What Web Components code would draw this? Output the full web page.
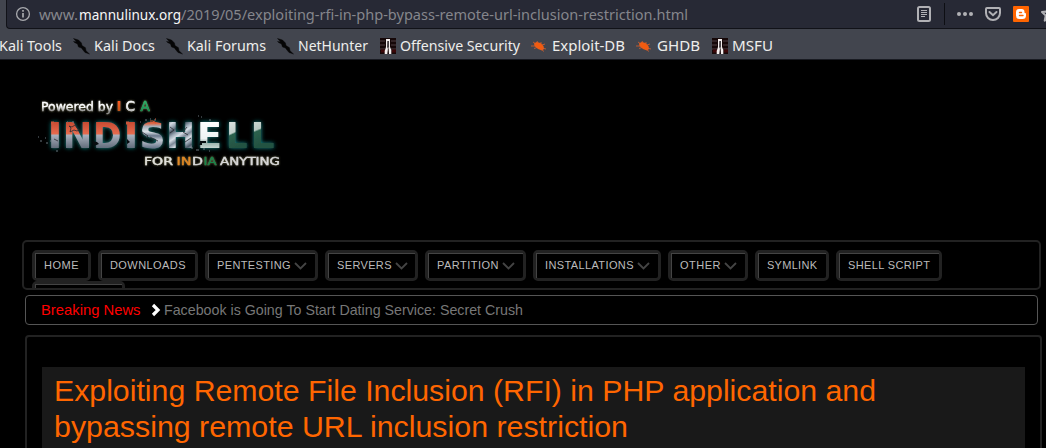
<!DOCTYPE html>
<html lang="en"><head><meta charset="utf-8"><title>Mannu Linux</title>
<style>html,body{margin:0;background:#000;height:448px;overflow:hidden}body{font-family:"Liberation Sans",Arial,sans-serif}</style></head>
<body><blog-window></blog-window>
<script>
const define=(name,html)=>customElements.define(name,class extends HTMLElement{
  connectedCallback(){if(this.shadowRoot)return;const r=this.attachShadow({mode:'open'});r.innerHTML=typeof html==='function'?html(this):html}
});
/* One line of text set to a fixed measure. */
define('fit-text',e=>{const w=+e.getAttribute('w'),h=+e.getAttribute('h')||20,b=+e.getAttribute('b')||15;
  return `<style>:host{display:block;flex:none;width:${w}px;height:${h}px}svg{display:block;overflow:visible}text{fill:currentColor;font:inherit}</style><svg width="${w}" height="${h}"><text x="0" y="${b}" textLength="${w}" lengthAdjust="${e.getAttribute('adjust')||'spacingAndGlyphs'}">${e.textContent}</text></svg>`});

const icons={
 kali:'<path d="M.5 .5l5 1.500 3 3 .5 2.500 3.500 2.200 .5 3 3.500 3.300-4.500-1.500-2.500-3-1-1.500-3-1-1-3-3-1.500-1-1 3 .3z" fill="#050506" stroke="#050506" stroke-width=".4"/>',
 off:'<path d="M0 0h16v16H0z" fill="#160809"/><path d="M0 3h5M0 7h5M0 11h5M11 3h5M11 7h5M11 11h5" stroke="#3d2c30" stroke-width="1.3"/><path d="M1 13h4M12 13h4" stroke="#3c0709" stroke-width="3"/><path d="M6 1h4v8l1.300 3v4H9l-.4-6-.7 1-.6 5H4.700v-3L6 9z" fill="#f4eeee"/><path d="M7.400 3h1.400v6L8 11l-.8-2z" fill="#201b20"/>',
 bug:'<path d="M3 5.500l2.500-1.500 4 1 3 3 .5 3-2 1.500-4-1.500-3.500-3z" fill="#f25b10"/><path d="M2 4l3 2M0 8h5M3 10.500l3-1M6 3l1 2M10 4l0 2M11 7l3-1M11 10l4 1M10 11l3 2.500" stroke="#d8602c" stroke-width=".8"/>'
};
define('book-mark',e=>{const k=e.getAttribute('icon');return `<style>:host{display:flex;height:20px;margin-right:11px;flex:none;color:#eeeeec;font:15px "Noto Sans",sans-serif}svg{width:17px;height:17px;margin:2px 4px 0 0}.off svg,.bug svg{width:16px;height:16px}.off svg{margin-left:1px}.bug svg{margin:2px 5px 0 0}.row{display:flex}</style><div class="row ${k||''}">${k?`<svg viewBox="0 0 ${k=='kali'?17:16} ${k=='kali'?17:16}">${icons[k]}</svg>`:''}<fit-text w="${e.getAttribute('w')}">${e.textContent}</fit-text></div>`});
define('address-bar',`<style>:host{display:block;height:29px;background:#42454e;box-sizing:border-box;padding-left:6px}
.field{display:flex;box-sizing:border-box;height:29px;background:#272935;border:solid #111218;border-width:0 0 1px 1px;border-radius:0 0 0 4px;font:15px "Noto Sans",sans-serif;color:#85868c;padding:5px 0 0 8px}.info{width:16px;height:16px;margin:1px 8px 0 0;flex:none}.www{margin-right:1px}.host{color:#f7f7f7}.tools{flex:none;display:block;width:140px;height:28px;margin:-5px 0 0 218px}</style>
<div class="field"><svg class="info" viewBox="0 0 16 16" fill="none" stroke="#a9aaae"><circle cx="8" cy="8" r="6.400" stroke-width="1.300"/><path d="M8 7v4.500M8 4v1.700" stroke-width="1.700"/></svg>
<fit-text class="www" w="39">www.</fit-text><fit-text class="host" w="102">mannulinux.org</fit-text><fit-text w="507">/2019/05/exploiting-rfi-in-php-bypass-remote-url-inclusion-restriction.html</fit-text>
<svg class="tools" viewBox="906 0 140 28"><rect x="918" y="7" width="12" height="14" rx="1.500" fill="none" stroke="#b1b1b5" stroke-width="2"/><path d="M921 10.500h6M921 12.500h6M921 14.500h6M921 16.500h4" stroke="#b1b1b5"/><path d="M944.500 3v22" stroke="#0d0e13"/><g fill="#b1b1b5"><circle cx="959" cy="14" r="2"/><circle cx="965" cy="14" r="2"/><circle cx="971" cy="14" r="2"/></g><path d="M987 8h12q1 0 1 1v4a7 7 0 0 1-14 0V9q0-1 1-1z" fill="none" stroke="#b1b1b5" stroke-width="2"/><path d="M989.500 12l3.500 3.200 3.500-3.200" fill="none" stroke="#b1b1b5" stroke-width="2" stroke-linecap="round"/><rect x="1013" y="6" width="16" height="16" rx="1" fill="#ff6501"/><path d="M1019 9h2.500q3 0 3 3v.5q0 .5.6.5.9 0 .9 1v1.500q0 3.500-3.500 3.500h-3q-3.500 0-3.500-3.500V12q0-3 3-3z" fill="#fff"/><path d="M1019.500 12.500h2M1019.500 15.500h3.500" stroke="#ff6501" stroke-width="1.400" stroke-linecap="round"/><path d="M1049 7l-2 4.500-5 .6 3.700 3.400-1 5.200 4.300-2.600" fill="none" stroke="#b1b1b5" stroke-width="2" stroke-linejoin="round"/></svg></div>`);
define('bookmark-bar',`<style>:host{display:flex;height:31px;background:#42454e;border-bottom:1px solid #191b22;box-sizing:border-box;padding-top:7px}book-mark:first-of-type{margin-left:-1px}</style>
<book-mark w="63">Kali Tools</book-mark><book-mark icon="kali" w="61">Kali Docs</book-mark><book-mark icon="kali" w="79">Kali Forums</book-mark><book-mark icon="kali" w="70">NetHunter</book-mark><book-mark icon="off" w="120">Offensive Security</book-mark><book-mark icon="bug" w="73">Exploit-DB</book-mark><book-mark icon="bug" w="43">GHDB</book-mark><book-mark icon="off" w="41">MSFU</book-mark>`);

define('site-logo',`<style>:host{display:block;width:260px;height:90px;padding:31px 0 59px 30px}svg{display:block;overflow:visible}text{font-family:"DejaVu Sans",sans-serif;font-weight:bold}.small{font-weight:normal;stroke-width:.35}</style>
<svg width="260" height="90" viewBox="30 91 260 90"><defs>
<linearGradient id="metal" gradientUnits="userSpaceOnUse" x1="0" y1="100" x2="0" y2="114"><stop stop-color="#fff"/><stop offset=".5" stop-color="#fff"/><stop offset=".8" stop-color="#909090"/></linearGradient>
<linearGradient id="red" gradientUnits="userSpaceOnUse" x1="0" y1="121" x2="0" y2="148"><stop stop-color="#c4482f"/><stop offset=".48" stop-color="#e66b4e"/><stop offset=".52" stop-color="#a9b0bd"/><stop offset="1" stop-color="#626d7c"/></linearGradient>
<linearGradient id="steel" gradientUnits="userSpaceOnUse" x1="0" y1="121" x2="0" y2="148"><stop offset=".08" stop-color="#e2603c"/><stop offset=".2" stop-color="#a5afb9"/><stop offset=".4" stop-color="#dce2e8"/><stop offset=".55" stop-color="#68768a"/><stop offset=".7" stop-color="#c3cad3"/><stop offset="1" stop-color="#67768a"/></linearGradient>
<linearGradient id="silver" gradientUnits="userSpaceOnUse" x1="168" y1="121" x2="174" y2="130" spreadMethod="reflect"><stop stop-color="#7a8796"/><stop offset=".35" stop-color="#d5dce4"/><stop offset=".65" stop-color="#a0acb9"/><stop offset="1" stop-color="#4b5866"/></linearGradient>
<linearGradient id="white" gradientUnits="userSpaceOnUse" x1="0" y1="121" x2="0" y2="148"><stop stop-color="#fff"/><stop offset=".65" stop-color="#eef2f2"/><stop offset=".8" stop-color="#9ab1ab"/><stop offset="1" stop-color="#c5d5d0"/></linearGradient>
<linearGradient id="green1" gradientUnits="userSpaceOnUse" x1="229" y1="121" x2="240" y2="145"><stop stop-color="#dde5e3"/><stop offset=".46" stop-color="#c2d0cc"/><stop offset=".52" stop-color="#2b614d"/><stop offset="1" stop-color="#245342"/></linearGradient>
<linearGradient id="green2" gradientUnits="userSpaceOnUse" x1="254" y1="121" x2="263" y2="143"><stop stop-color="#cbd8d4"/><stop offset=".38" stop-color="#b7c8c2"/><stop offset=".45" stop-color="#2b614d"/><stop offset="1" stop-color="#245342"/></linearGradient>
<linearGradient id="orange" gradientUnits="userSpaceOnUse" x1="0" y1="101" x2="0" y2="111"><stop stop-color="#ff5a20"/><stop offset="1" stop-color="#bb541d"/></linearGradient><linearGradient id="emerald" gradientUnits="userSpaceOnUse" x1="0" y1="101" x2="0" y2="111"><stop stop-color="#39c778"/><stop offset="1" stop-color="#087542"/></linearGradient>
<filter id="aura" x="-20%" y="-40%" width="140%" height="180%"><feDropShadow dx="0" dy="0" stdDeviation="2" flood-color="#168a8a"/></filter><filter id="glow" x="-20%" y="-60%" width="140%" height="220%"><feDropShadow dx="0" dy="0" stdDeviation="1.300" flood-color="#77754e"/></filter></defs>
<g filter="url(#glow)"><text class="small" x="41" y="111" font-size="12.500" textLength="72" lengthAdjust="spacingAndGlyphs" fill="url(#metal)" stroke="url(#metal)">Powered by</text><text y="111" font-size="13.500"><tspan x="116.500" fill="url(#orange)">I</tspan><tspan x="125.500" fill="url(#metal)" font-weight="normal" stroke="#eee" stroke-width=".5">C</tspan><tspan x="140.500" fill="url(#emerald)" font-weight="normal" stroke="#20a965" stroke-width=".6">A</tspan></text></g>
<g filter="url(#aura)" font-size="35.500"><text y="147.500" x="47.500" textLength="15" lengthAdjust="spacingAndGlyphs" fill="url(#red)">I</text><text y="147.500" x="62.800" textLength="29.500" lengthAdjust="spacingAndGlyphs" fill="url(#red)">N</text><text y="147.500" x="93" textLength="28.500" lengthAdjust="spacingAndGlyphs" fill="url(#red)">D</text><text y="147.500" x="123.500" textLength="15" lengthAdjust="spacingAndGlyphs" fill="url(#red)">I</text><text y="147.500" x="139.400" textLength="26" lengthAdjust="spacingAndGlyphs" fill="url(#steel)">S</text><text y="147.500" x="166" textLength="29" lengthAdjust="spacingAndGlyphs" fill="url(#silver)">H</text><text y="147.500" x="197" textLength="25" lengthAdjust="spacingAndGlyphs" fill="url(#white)">E</text><text y="147.500" x="226" textLength="21.500" lengthAdjust="spacingAndGlyphs" fill="url(#green1)">L</text><text y="147.500" x="250.500" textLength="24" lengthAdjust="spacingAndGlyphs" fill="url(#green2)">L</text></g>
<path d="M69 126l3 1 3-2 2 3 2 2-2 1-3-1-4 2 1-4zM142 132l6 4-2 2M158 141l-8-4M170 127l4 3-4 3M187 127l-4 5 5 3M185 142l6-4M54 139l4 2" fill="none" stroke="#282a30" stroke-width=".8"/>
<path d="M200 141h6v2h-4v2h-3zM92 141l5 1 2 2-5 2zM127 139l3 3-3 2z" fill="#080d10"/>
<path d="M51 121.500h3v3h-3zM126 121.500h3v3h-3z" fill="#c9543a"/>
<path d="M38 137h1m1 4h2m3-3h1m0 5h2m2-2h1M56 151h2m9-29h1m4 0h2m66 0h1m4-2h2m3-1h1m3 1h2m42-4h1m2 1h1m7 3h2m-20 28h2m3 2h3m4-1h2m4 2h1" stroke="#69757c" stroke-width="1"/>
<path d="M150 121h3m2-2h1m-3 2l3 2" stroke="#d7552e" stroke-width="1.200"/>
<g filter="url(#glow)"><text class="small" x="144" y="164.500" font-size="10" textLength="29" lengthAdjust="spacingAndGlyphs" fill="#e0e0da" stroke="#e0e0da">FOR</text><text class="small" x="176.500" y="164.500" font-size="10.500" textLength="15" lengthAdjust="spacingAndGlyphs" fill="#e18922" stroke="#e18922">IN</text><text class="small" x="192" y="164.500" font-size="10.500" textLength="11" lengthAdjust="spacingAndGlyphs" fill="#ddd" stroke="#ddd">D</text><text class="small" x="203.500" y="164.500" font-size="10.500" textLength="13" lengthAdjust="spacingAndGlyphs" fill="#14864d" stroke="#14864d">IA</text><text class="small" x="220" y="164.500" font-size="10" textLength="60" lengthAdjust="spacingAndGlyphs" fill="#d8d8d8" stroke="#d8d8d8">ANYTING</text></g></svg>`);

define('nav-item',e=>`<style>:host{display:block;box-sizing:border-box;width:${e.getAttribute('box')}px;height:31px;border:3px solid #222;border-radius:5px;flex:none;color:#bbb;font:11px "Liberation Sans",sans-serif}.in{box-sizing:border-box;height:25px;border:solid #444;border-width:1px 0 0 1px;padding:4px 0 0 8px;display:flex}svg{width:14px;height:8px;margin:4px 0 0 3px;flex:none;fill:none;stroke:#444;stroke-width:1.800}</style><div class="in">${e.textContent?`<fit-text adjust="spacing" h="16" b="11" w="${e.getAttribute('w')}">${e.textContent}</fit-text>`:''}${e.hasAttribute('menu')?'<svg viewBox="0 0 14 8"><path d="M1 1l5.500 5.500L12 1"/></svg>':''}</div>`);
define('site-nav',`<style>:host{display:flex;flex-wrap:wrap;align-content:flex-start;gap:0 7px;box-sizing:border-box;width:1019px;height:50px;margin-left:22px;padding:8px;border:2px solid #222;border-radius:5px;overflow:hidden}nav-item:nth-of-type(9){margin-right:50px}</style>
<nav-item box="59" w="34.500">HOME</nav-item><nav-item box="100" w="75.500">DOWNLOADS</nav-item><nav-item box="113" w="73.500" menu>PENTESTING</nav-item><nav-item box="93" w="54.500" menu>SERVERS</nav-item><nav-item box="101" w="61.500" menu>PARTITION</nav-item><nav-item box="128" w="88.500" menu>INSTALLATIONS</nav-item><nav-item box="80" w="40.500" menu>OTHER</nav-item><nav-item box="74" w="50">SYMLINK</nav-item><nav-item box="106" w="82">SHELL SCRIPT</nav-item><nav-item box="93"></nav-item>`);
define('news-ticker',`<style>:host{display:flex;box-sizing:border-box;width:1013px;height:30px;margin:5px 0 0 25px;padding:4px 0 0 15px;border:1px solid #555;border-radius:4px;color:#777;font:14.500px "Liberation Sans",sans-serif}.label{color:#f00;font-size:15px}svg{width:10px;height:14px;margin:3px 3px 0 10px;flex:none}</style><fit-text class="label" w="99.500">Breaking News</fit-text><svg viewBox="0 0 10 14"><path d="M2 2l5 5-5 5" fill="none" stroke="#fff" stroke-width="3.200"/></svg><fit-text w="359">Facebook is Going To Start Dating Service: Secret Crush</fit-text>`);
define('blog-post',`<style>:host{display:block;box-sizing:border-box;width:1017px;height:150px;margin:10px 0 0 25px;border:2px solid #222;border-radius:4px;padding:30px 15px}.head{height:100px;background:#191919;color:#ff6600;font:30px "Liberation Sans",sans-serif;padding:5px 12px}</style><div class="head"><fit-text w="822" h="36" b="29">Exploiting Remote File Inclusion (RFI) in PHP application and</fit-text><fit-text w="574" h="36" b="29">bypassing remote URL inclusion restriction</fit-text></div>`);
define('blog-window',`<style>:host{display:block;width:1046px;height:448px;overflow:hidden;background:#000}</style><address-bar></address-bar><bookmark-bar></bookmark-bar><site-logo></site-logo><site-nav></site-nav><news-ticker></news-ticker><blog-post></blog-post>`);
</script></body></html>
